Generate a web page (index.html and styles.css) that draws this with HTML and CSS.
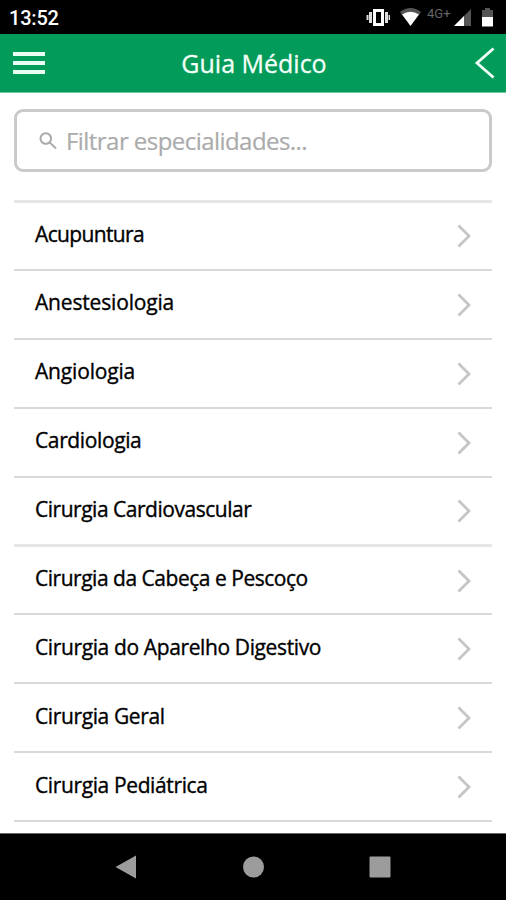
FILE: index.html
```html
<!DOCTYPE html>
<html lang="pt-BR">
<head>
<meta charset="utf-8">
<title>Guia Médico</title>
<link rel="stylesheet" href="styles.css">
</head>
<body>
<div class="status">
  <span class="clock">13:52</span>
  <div class="status-icons">
    <svg width="24" height="34" viewBox="366 0 24 34"><path fill="#fff" fill-rule="evenodd" d="M373 9h11v17h-11zM376 12v11h5V12z"/><path fill="#ddd" d="M369 12h3v11h-3zM385 12h3v11h-3zM366.500 15h2v5h-2zM388.500 15h2v5h-2z"/></svg>
    <svg class="wifi" width="22" height="34" viewBox="400 0 22 34"><path fill="#555" d="M400 12Q410.500 4 421 12l-2 3H402z"/><path fill="#fff" d="M402 14.500Q410.500 9 419 14.500L410.500 26z"/></svg>
    <span class="network">4G+</span>
    <svg class="signal" width="18" height="34" viewBox="453 0 18 34"><path fill="#555" d="M471 9v17h-17z"/><path fill="#fff" d="M464 16v10h-10z"/></svg>
    <svg class="battery" width="11" height="34" viewBox="482 0 11 34"><path fill="#555" d="M482 10h3V8h5v2h3v7h-11z"/><path fill="#fff" d="M482 17h11v9.500h-11z"/></svg>
  </div>
</div>
<header class="header">
  <div class="menu"><i></i><i></i><i></i></div>
  <h1 class="title">Guia Médico</h1>
  <svg class="back" width="22" height="34" viewBox="0 0 22 34"><path d="M19.500 2.500L3 17l16.500 14.500"/></svg>
</header>
<main class="content">
  <div class="search">
    <svg width="18" height="18" viewBox="0 0 18 18"><circle cx="6.800" cy="6.500" r="5.300"/><path d="M10.700 10.400L17 16.500"/></svg>
    <span class="placeholder">Filtrar especialidades...</span>
  </div>
  <ul class="list">
    <li><span class="name tight">Acupuntura</span><svg class="chevron" viewBox="0 0 14 24"><path d="M1.500 1.500L12 12 1.500 22.500"/></svg></li>
    <li><span class="name loose">Anestesiologia</span><svg class="chevron" viewBox="0 0 14 24"><path d="M1.500 1.500L12 12 1.500 22.500"/></svg></li>
    <li><span class="name loose">Angiologia</span><svg class="chevron" viewBox="0 0 14 24"><path d="M1.500 1.500L12 12 1.500 22.500"/></svg></li>
    <li><span class="name">Cardiologia</span><svg class="chevron" viewBox="0 0 14 24"><path d="M1.500 1.500L12 12 1.500 22.500"/></svg></li>
    <li><span class="name snug">Cirurgia Cardiovascular</span><svg class="chevron" viewBox="0 0 14 24"><path d="M1.500 1.500L12 12 1.500 22.500"/></svg></li>
    <li><span class="name snug">Cirurgia da Cabeça e Pescoço</span><svg class="chevron" viewBox="0 0 14 24"><path d="M1.500 1.500L12 12 1.500 22.500"/></svg></li>
    <li><span class="name">Cirurgia do Aparelho Digestivo</span><svg class="chevron" viewBox="0 0 14 24"><path d="M1.500 1.500L12 12 1.500 22.500"/></svg></li>
    <li><span class="name">Cirurgia Geral</span><svg class="chevron" viewBox="0 0 14 24"><path d="M1.500 1.500L12 12 1.500 22.500"/></svg></li>
    <li><span class="name">Cirurgia Pediátrica</span><svg class="chevron" viewBox="0 0 14 24"><path d="M1.500 1.500L12 12 1.500 22.500"/></svg></li>
  </ul>
</main>
<nav class="navbar">
  <svg width="22" height="24" viewBox="0 0 22 24"><path d="M21 .5v23L.5 12z"/></svg>
  <svg width="22" height="24" viewBox="0 0 22 24"><circle cx="11.500" cy="12" r="10.500"/></svg>
  <svg width="22" height="24" viewBox="0 0 22 24"><rect x=".5" y="1.500" width="21" height="21" rx="1"/></svg>
</nav>
</body>
</html>
```

FILE: styles.css
```css
* { box-sizing: border-box; }
body {
  margin: 0;
  height: 900px;
  display: flex;
  flex-direction: column;
  overflow: hidden;
  background: #fff;
  font-family: "Open Sans", "Noto Sans", sans-serif;
}
svg { display: block; flex: none; }
.status {
  height: 34px;
  flex: none;
  display: flex;
  align-items: center;
  justify-content: space-between;
  padding: 0 13px 0 9px;
  background: #000;
}
.clock { color: #fff; font: 500 20px/34px Roboto, sans-serif; letter-spacing: -0.2px; padding-top: 2px; }
.status-icons { display: flex; }
.wifi { margin-left: 10px; }
.network {
  width: 26px;
  margin-left: 5px;
  color: #666;
  font: 400 13px/27px Roboto, sans-serif;
  white-space: nowrap;
}
.battery { margin-left: 11px; }
.header {
  height: 59px;
  flex: none;
  display: grid;
  grid-template-columns: 32px 1fr 22px;
  align-items: center;
  padding: 0 10px 0 13px;
  background: #029b59;
  border-bottom: 1px solid #75c7a0;
}
.menu { display: grid; gap: 5px; }
.menu i { height: 4px; background: #e9fff3; }
.title {
  margin: 0;
  padding-right: 11px;
  text-align: center;
  color: #f2fff8;
  font-size: 25px;
  font-weight: 400;
  line-height: 58px;
  -webkit-text-stroke: 0.3px;
}
.back path { fill: none; stroke: #f2fff8; stroke-width: 2.800; }
.content { flex: 1; padding: 16px 14px 0; }
.search {
  height: 63px;
  display: flex;
  align-items: center;
  gap: 9px;
  padding-left: 22px;
  border: 3px solid #cacaca;
  border-radius: 9px;
}
.search svg { fill: none; stroke: #aaa; stroke-width: 2; }
.placeholder {
  color: #ababab;
  font-size: 24px;
  letter-spacing: -0.55px;
  line-height: 56px;
  -webkit-text-stroke: 0.2px;
}
.list {
  margin: 28px 0 0;
  padding: 0;
  list-style: none;
  border-top: 3px solid #e6e6e6;
}
.list li {
  height: 68.900px;
  display: flex;
  align-items: center;
  justify-content: space-between;
  padding: 0 21px;
  border-bottom: 2px solid #d9d9d9;
}
.list li:first-child { height: 68px; }
.list li:nth-child(5) { border-bottom: 3px solid #e6e6e6; }
.name {
  margin-bottom: 4px;
  color: #000;
  font-size: 21px;
  letter-spacing: -0.38px;
  line-height: 30px;
  white-space: nowrap;
  -webkit-text-stroke: 0.35px;
}
.tight { letter-spacing: -0.65px; margin-bottom: 5px; }
.snug { letter-spacing: -0.48px; }
.loose { letter-spacing: -0.17px; }
.chevron { width: 14px; height: 24px; margin-top: 1px; }
.list li:first-child .chevron { margin-top: 0; }
.chevron path { fill: none; stroke: #c5c5c5; stroke-width: 2.800; }
.navbar {
  height: 67px;
  flex: none;
  display: flex;
  align-items: center;
  justify-content: space-between;
  padding: 0 115px;
  background: #000;
  border-top: 1px solid #666;
}
.navbar svg { fill: #9c9c9c; }
```
